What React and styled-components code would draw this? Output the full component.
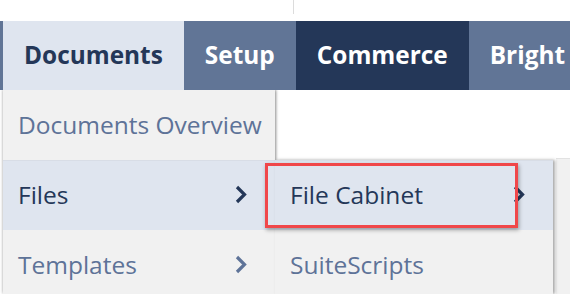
import React from 'react';
import styled, { createGlobalStyle } from 'styled-components';

const GlobalStyle = createGlobalStyle`
    html, body {
        margin: 0;
        padding: 0;
        background: #ffffff;
    }
    body {
        width: 570px;
        height: 294px;
        overflow: hidden;
        font-family: 'Open Sans', 'Liberation Sans', sans-serif;
    }
`;

const tabs = [
    { label: 'Documents', kind: 'open' },
    { label: 'Setup', kind: 'normal' },
    { label: 'Commerce', kind: 'dark' },
    { label: 'Bright', kind: 'normal' },
];

const mainItems = [
    { label: 'Documents Overview', tone: 'muted' },
    { label: 'Files', tone: 'strong', hover: true, arrow: true },
    { label: 'Templates', tone: 'muted', arrow: true },
];

const subItems = [
    { label: 'File Cabinet', tone: 'strong', hover: true, arrow: true, marked: true },
    { label: 'SuiteScripts', tone: 'muted' },
];

const Chevron = ({ tone }) => (
    <ArrowIcon viewBox="0 0 12 19" $tone={tone}>
        <polyline points="2,2 9.5,9.5 2,17" />
    </ArrowIcon>
);

const MenuList = ({ items }) =>
    items.map((item) => (
        <MenuRow key={item.label} $hover={item.hover}>
            <RowLabel $tone={item.tone}>{item.label}</RowLabel>
            {item.arrow && <Chevron tone={item.tone} />}
            {item.marked && <Marker />}
        </MenuRow>
    ));

const App = () => {
    return (
        <Page>
            <GlobalStyle />
            <TopStrip>
                <Divider />
            </TopStrip>
            <NavBar>
                {tabs.map((tab) => (
                    <Tab key={tab.label} $kind={tab.kind}>
                        {tab.label}
                    </Tab>
                ))}
            </NavBar>
            <DropArea>
                <MainMenu>
                    <MenuList items={mainItems} />
                </MainMenu>
                <SubMenu>
                    <MenuList items={subItems} />
                </SubMenu>
                <ThirdMenu />
            </DropArea>
        </Page>
    );
};

export default App;

const Page = styled.div`
    width: 570px;
    height: 294px;
    overflow: hidden;
    display: flex;
    flex-direction: column;
`;

const TopStrip = styled.div`
    height: 21px;
    background: #ffffff;
    position: relative;
    flex-shrink: 0;
`;

const Divider = styled.div`
    position: absolute;
    left: 293px;
    top: 0;
    width: 1px;
    height: 14px;
    background: #dcdcdc;
`;

const NavBar = styled.div`
    display: flex;
    height: 69px;
    flex-shrink: 0;
    padding-left: 3px;
    background: #617596;
    white-space: nowrap;
    overflow: hidden;
    position: relative;
    z-index: 2;
`;

const Tab = styled.div`
    display: flex;
    align-items: center;
    flex-shrink: 0;
    padding: 0 21px 3px 21px;
    font-size: 24.4px;
    font-weight: 700;
    color: ${({ $kind }) => ($kind === 'open' ? '#243758' : '#ffffff')};
    background: ${({ $kind }) =>
        $kind === 'open' ? '#dfe5ef' : $kind === 'dark' ? '#243758' : '#617596'};
`;

const DropArea = styled.div`
    flex: 1;
    display: flex;
    padding-left: 3px;
    min-height: 0;
`;

const MainMenu = styled.div`
    width: 272px;
    flex-shrink: 0;
    background: #f1f1f1;
    box-shadow: 1px 0 3px rgba(0, 0, 0, 0.35), 0 -1px 3px rgba(0, 0, 0, 0.25);
    position: relative;
    z-index: 1;
`;

const SubMenu = styled.div`
    width: 278px;
    flex-shrink: 0;
    margin-top: 70px;
    background: #f1f1f1;
    box-shadow: 2px 0 3px rgba(0, 0, 0, 0.35);
    position: relative;
    z-index: 1;
`;

const ThirdMenu = styled.div`
    flex: 1;
    margin-top: 68px;
    margin-left: 3px;
    background: #f1f1f1;
    border-top: 1px solid #e2e2e2;
`;

const MenuRow = styled.div`
    position: relative;
    display: flex;
    align-items: center;
    justify-content: space-between;
    height: 70px;
    padding: 0 28px 2px 15px;
    box-sizing: border-box;
    background: ${({ $hover }) => ($hover ? '#dfe5ef' : 'transparent')};
    border-top: 1px solid ${({ $hover }) => ($hover ? '#d8dde6' : 'transparent')};
`;

const RowLabel = styled.span`
    font-size: 24.5px;
    font-weight: 400;
    color: ${({ $tone }) => ($tone === 'strong' ? '#243758' : '#5e7398')};
    white-space: nowrap;
`;

const ArrowIcon = styled.svg`
    width: 12px;
    height: 19px;
    flex-shrink: 0;
    overflow: visible;
    fill: none;
    stroke: ${({ $tone }) => ($tone === 'strong' ? '#243758' : '#5e7398')};
    stroke-width: 3.2;
    stroke-linecap: butt;
    stroke-linejoin: miter;
`;

const Marker = styled.div`
    position: absolute;
    left: -10px;
    top: 2px;
    width: 253px;
    height: 65px;
    box-sizing: border-box;
    border: 3px solid #f0474a;
    box-shadow: 1px 2px 4px rgba(0, 0, 0, 0.35);
    pointer-events: none;
`;
